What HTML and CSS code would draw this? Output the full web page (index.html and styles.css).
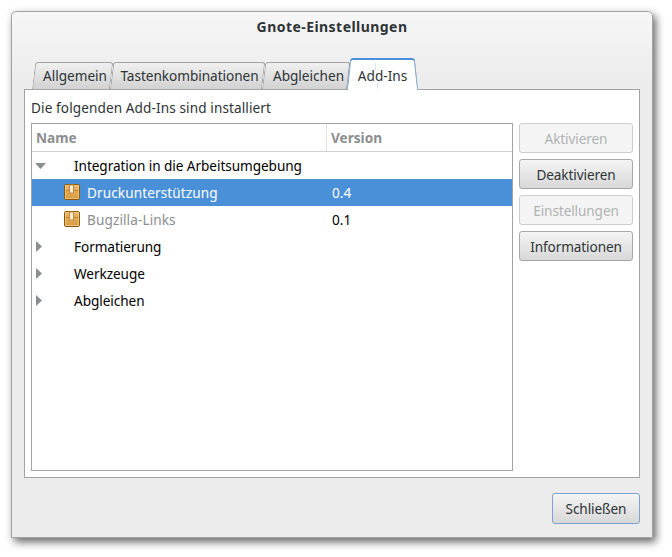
FILE: index.html
```html
<!DOCTYPE html>
<html lang="de">
<head>
<meta charset="utf-8">
<title>Gnote-Einstellungen</title>
<link rel="stylesheet" href="styles.css">
</head>
<body>
<div class="window">
  <header class="titlebar">Gnote-Einstellungen</header>
  <div class="tabs">
    <div class="tab tab-a">Allgemein</div>
    <div class="tab tab-b">Tastenkombinationen</div>
    <div class="tab tab-c">Abgleichen</div>
    <div class="tab tab-active">Add-Ins</div>
  </div>
  <div class="panel">
    <div class="intro">Die folgenden Add-Ins sind installiert</div>
    <div class="columns">
      <div class="tree">
        <div class="tree-head">
          <div class="col-name">Name</div>
          <div class="col-version">Version</div>
        </div>
        <div class="row">
          <svg class="arrow" width="12" height="8" viewBox="0 0 12 8"><path d="M0 1h11L5.500 7z"/></svg>
          <span class="group-name">Integration in die Arbeitsumgebung</span>
        </div>
        <div class="row row-selected">
          <svg class="pkg" width="16" height="17" viewBox="0 0 16 17"><use href="#pkg"/></svg>
          <span class="item-name">Druckunterstützung</span>
          <span class="item-version">0.4</span>
        </div>
        <div class="row">
          <svg class="pkg" width="16" height="17" viewBox="0 0 16 17"><use href="#pkg"/></svg>
          <span class="item-name item-disabled">Bugzilla-Links</span>
          <span class="item-version">0.1</span>
        </div>
        <div class="row">
          <svg class="arrow arrow-closed" width="6" height="12" viewBox="0 0 6 12"><path d="M0 0l6 5.500-6 5.500z"/></svg>
          <span class="group-name">Formatierung</span>
        </div>
        <div class="row">
          <svg class="arrow arrow-closed" width="6" height="12" viewBox="0 0 6 12"><path d="M0 0l6 5.500-6 5.500z"/></svg>
          <span class="group-name">Werkzeuge</span>
        </div>
        <div class="row">
          <svg class="arrow arrow-closed" width="6" height="12" viewBox="0 0 6 12"><path d="M0 0l6 5.500-6 5.500z"/></svg>
          <span class="group-name">Abgleichen</span>
        </div>
      </div>
      <div class="actions">
        <button class="btn" disabled>Aktivieren</button>
        <button class="btn">Deaktivieren</button>
        <button class="btn" disabled>Einstellungen</button>
        <button class="btn">Informationen</button>
      </div>
    </div>
  </div>
  <footer class="footer">
    <button class="btn btn-default">Schließen</button>
  </footer>
</div>
<svg class="defs" width="0" height="0">
  <defs>
    <linearGradient id="box" x1="0" y1="0" x2="0" y2="1">
      <stop offset="0" stop-color="#e9b96e"/>
      <stop offset="1" stop-color="#d99a3f"/>
    </linearGradient>
    <g id="pkg">
      <rect x="0.500" y="0.500" width="15" height="15" rx="1.500" fill="url(#box)" stroke="#8f5902"/>
      <rect x="1.500" y="1.500" width="13" height="13" fill="none" stroke="#f5d9a8" stroke-opacity=".6"/>
      <path d="M1.500 6.500h13" stroke="#c17d11" stroke-opacity=".7"/>
      <rect x="5.500" y="1" width="4" height="8" fill="#fbeed6" stroke="#c48a38" stroke-width="1"/>
    </g>
  </defs>
</svg>
</body>
</html>
```

FILE: styles.css
```css
* { box-sizing: border-box; }
html, body { margin: 0; height: 100%; background: #fff; }
body {
  padding: 11px 19px 19px 11px;
  font-family: "Noto Sans", "Open Sans", sans-serif;
  font-size: 13.6px;
  color: #2e3436;
}
.window {
  width: 642px;
  height: 527px;
  display: flex;
  flex-direction: column;
  background: linear-gradient(#f6f6f6, #ececec 70px);
  border: 1px solid #a3a3a3;
  border-radius: 5px 5px 0 0;
  box-shadow: 3px 4px 9px rgba(0, 0, 0, .6);
}
.titlebar {
  height: 31px;
  margin-top: 2px;
  line-height: 26px;
  text-align: center;
  font-weight: 700;
  font-size: 14px;
  letter-spacing: .45px;
}
.tabs {
  display: flex;
  height: 33px;
  margin-top: 11px;
  padding-left: 20px;
  align-items: flex-end;
}
.tab {
  position: relative;
  height: 27px;
  padding-left: 8px;
  line-height: 28px;
  text-align: center;
  z-index: 0;
}
.tab::before {
  content: "";
  position: absolute;
  top: 0;
  bottom: 0;
  left: 0;
  right: 0;
  z-index: -1;
  background: linear-gradient(#f0f0f0, #d2d2d2);
  border: 1px solid #a3a3a3;
  border-width: 1px 1px 0;
  border-radius: 3px 3px 0 0;
  transform-origin: bottom left;
  transform: skewX(-7deg);
}
.tab-a { width: 78px; }
.tab-b { width: 152px; padding-left: 7px; letter-spacing: -.03px; }
.tab-c { width: 85px; padding-left: 8px; }
.tab-active {
  width: 71px;
  height: 31px;
  padding-left: 0;
  line-height: 33px;
  margin-bottom: -1px;
  z-index: 1;
}
.tab-active::before, .tab-active::after {
  content: "";
  position: absolute;
  top: 0;
  bottom: 0;
  width: 55%;
  z-index: -1;
  background: #fff;
  border: 0 solid #8fa9c4;
  border-top: 1px solid #4a90d9;
  box-shadow: 0 -1px 0 #4a90d9;
}
.tab-active::before {
  left: 0;
  right: auto;
  border-left-width: 1px;
  border-radius: 3px 0 0 0;
  transform-origin: bottom left;
  transform: skewX(-6deg);
}
.tab-active::after {
  right: 0;
  border-right-width: 1px;
  border-radius: 0 3px 0 0;
  transform-origin: bottom right;
  transform: skewX(6deg);
}
.panel {
  width: 616px;
  height: 389px;
  margin-left: 12px;
  padding: 8px 6px 6px;
  background: #fff;
  border: 1px solid #a3a3a3;
  display: flex;
  flex-direction: column;
}
.intro {
  height: 25px;
  line-height: 20px;
  letter-spacing: .1px;
}
.columns {
  display: flex;
  flex: 1;
  gap: 6px;
}
.tree {
  width: 482px;
  border: 1px solid #a3a3a3;
  background: #fff;
}
.tree-head {
  display: flex;
  height: 28px;
  border-bottom: 1px solid #cfcfcf;
  font-weight: 700;
  color: #8b8e8f;
  line-height: 27px;
}
.col-name {
  width: 295px;
  padding-left: 4px;
  border-right: 1px solid #dfdfdf;
}
.col-version { padding-left: 4px; }
.row {
  display: flex;
  align-items: center;
  height: 27px;
  position: relative;
  color: #000;
}
.row-selected { background: #4a90d9; color: #fff; }
.arrow { margin-left: 3px; fill: #8b8e8f; flex: none; }
.arrow-closed { margin-left: 4px; }
.group-name { position: absolute; left: 42px; letter-spacing: -.06px; }
.pkg { margin-left: 32px; flex: none; }
.item-name { margin-left: 7px; width: 245px; letter-spacing: .1px; }
.item-disabled { color: #8b8e8f; }
.item-version { flex: none; }
.actions {
  width: 114px;
  display: flex;
  flex-direction: column;
  gap: 6px;
}
.btn {
  height: 30px;
  padding: 0;
  font: inherit;
  letter-spacing: -.1px;
  color: #2e3436;
  border: 1px solid #a8a8a8;
  border-radius: 3px;
  background: linear-gradient(#f4f4f4, #d8d8d8);
}
.btn:disabled {
  color: #b0b3b3;
  background: #f4f4f4;
  border-color: #cdcdcd;
}
.footer {
  display: flex;
  justify-content: flex-end;
  padding: 15px 12px 0 0;
}
.btn-default {
  width: 88px;
  height: 31px;
  border-color: #7ca3cf;
}
.defs { position: absolute; }
```
